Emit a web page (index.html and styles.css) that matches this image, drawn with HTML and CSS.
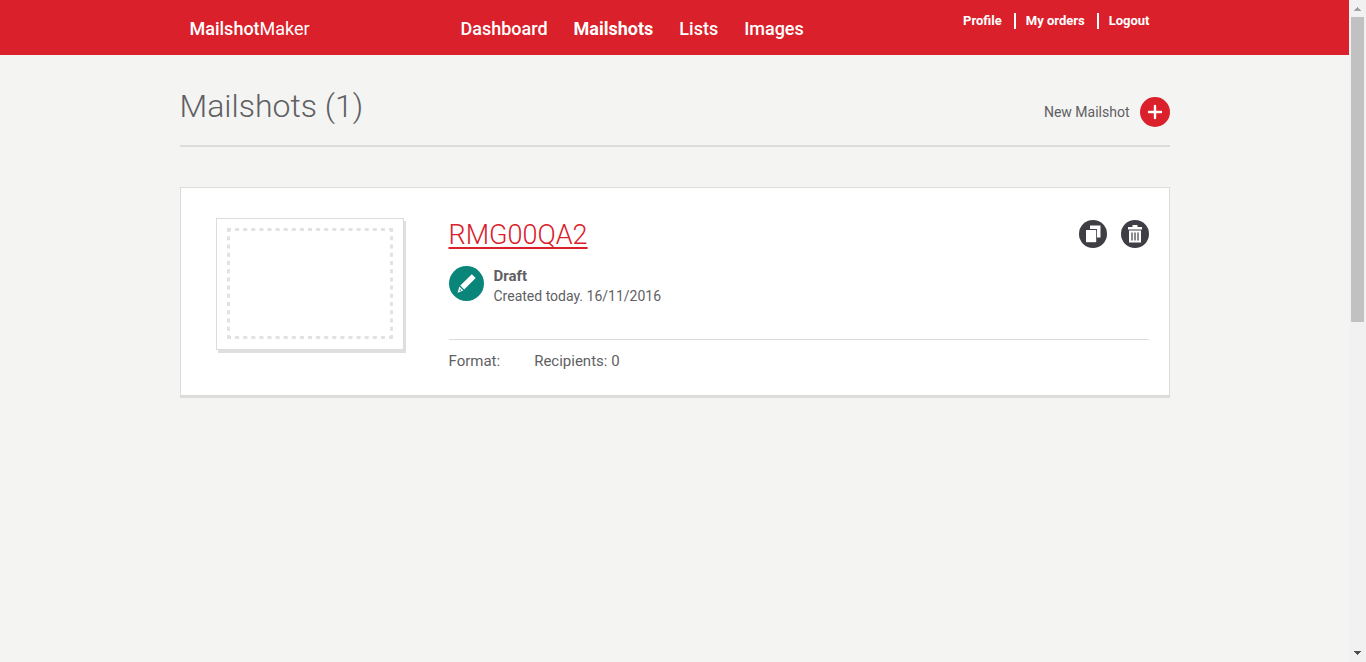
FILE: index.html
```html
<!DOCTYPE html>
<html lang="en">
<head>
<meta charset="utf-8">
<meta name="viewport" content="width=device-width, initial-scale=1">
<title>MailshotMaker</title>
<link rel="stylesheet" href="styles.css">
</head>
<body>
<div class="frame">
  <div class="page">
    <header class="header">
      <div class="container header-row">
        <a class="brand" href="#"><strong>Mailshot</strong>Maker</a>
        <nav class="nav" aria-label="Main">
          <a href="#">Dashboard</a>
          <a class="active" href="#" aria-current="page">Mailshots</a>
          <a href="#">Lists</a>
          <a href="#">Images</a>
        </nav>
        <nav class="account" aria-label="Account">
          <a href="#">Profile</a>
          <a href="#">My orders</a>
          <a href="#">Logout</a>
        </nav>
      </div>
    </header>
    <main class="container">
      <div class="title-row">
        <h1>Mailshots (1)</h1>
        <a class="new" href="#">New Mailshot
          <svg width="30" height="30" viewBox="0 0 30 30" aria-hidden="true">
            <circle cx="15" cy="15" r="15" fill="#da202a"/>
            <path d="M9 15h12M15 9v12" stroke="#fff" stroke-width="2.400" stroke-linecap="round"/>
          </svg>
        </a>
      </div>
      <article class="card">
        <div class="thumb">
          <svg viewBox="0 0 166 111" aria-hidden="true">
            <path d="M0 1.500H166M0 109.500H166" stroke="#e2e2e2" stroke-width="3" stroke-dasharray="4 4.100"/>
            <path d="M1.500 0V111M164.500 0V111" stroke="#e2e2e2" stroke-width="3" stroke-dasharray="4 4.230"/>
          </svg>
        </div>
        <div class="details">
          <div class="details-top">
            <h2><a href="#">RMG00QA2</a></h2>
            <div class="actions">
              <button type="button" aria-label="Copy">
                <svg width="28" height="28" viewBox="0 0 28 28" aria-hidden="true">
                  <circle cx="14" cy="14" r="14" fill="#3e3e44"/>
                  <path fill="#fff" d="M11 5.500h10.500v12H18V9h-7z"/>
                  <path fill="#fff" d="M7 10h10.200v12.200H7z"/>
                </svg>
              </button>
              <button type="button" aria-label="Delete">
                <svg width="28" height="28" viewBox="0 0 28 28" aria-hidden="true">
                  <circle cx="14" cy="14" r="14" fill="#3e3e44"/>
                  <path fill="#fff" d="M11.500 5h5v2H21v2.500H7V7h4.500zM8 10.500h12v12H8z"/>
                  <path stroke="#3e3e44" stroke-width="1.200" d="M11 12.500v8M14 12.500v8M17 12.500v8"/>
                </svg>
              </button>
            </div>
          </div>
          <div class="status">
            <svg width="35" height="35" viewBox="0 0 35 35" aria-hidden="true">
              <circle cx="17.500" cy="17.500" r="17.500" fill="#0a857a"/>
              <path fill="#fff" d="M22.800 8.200L26.700 12 15.200 23.400l-3.900-3.900zM10.400 20.500l3.900 3.900-5.700 2.300z"/>
              <path fill="#0a857a" d="M11.100 23.100l1.300 1.300-1.900.7z"/>
            </svg>
            <div>
              <strong>Draft</strong>
              <p>Created today. 16/11/2016</p>
            </div>
          </div>
          <div class="meta">
            <span>Format:</span>
            <span>Recipients: 0</span>
          </div>
        </div>
      </article>
    </main>
  </div>
  <div class="scrollbar" aria-hidden="true">
    <svg width="17" height="17" viewBox="0 0 17 17" shape-rendering="crispEdges"><path fill="#a3a3a3" d="M5 11L8.500 7L12 11z"/></svg>
    <div class="track"><div class="handle"></div></div>
    <svg width="17" height="17" viewBox="0 0 17 17" shape-rendering="crispEdges"><path fill="#505050" d="M5 6H12L8.500 10z"/></svg>
  </div>
</div>
</body>
</html>
```
FILE: styles.css
```css
* {
  box-sizing: border-box;
}

body {
  margin: 0;
  background: #f4f4f2;
  color: #5f5f64;
  font: 14px/20px Roboto, "Liberation Sans", sans-serif;
}

h1, h2, p {
  margin: 0;
  font-weight: 300;
}

a {
  color: inherit;
  text-decoration: none;
}

svg {
  display: block;
}

.frame {
  display: flex;
  min-height: 100vh;
}

.page {
  flex: 1;
  min-width: 0;
}

.container {
  max-width: 990px;
  margin: 0 auto;
}

.header {
  background: #da202a;
  color: #fff;
}

.header-row {
  display: flex;
  align-items: flex-start;
  padding: 13px 20px 10px 10px;
}

.brand {
  width: 271px;
  font-size: 18px;
  line-height: 32px;
}

.brand strong {
  font-weight: 500;
}

.nav {
  display: flex;
  gap: 26px;
  font-size: 18px;
  line-height: 32px;
  font-weight: 500;
}

.nav .active {
  font-weight: 700;
}

.account {
  display: flex;
  margin-left: auto;
  font-size: 13px;
  line-height: 16px;
  font-weight: 700;
}

.account a + a {
  margin-left: 12px;
  padding-left: 10px;
  border-left: 2px solid #fff;
}

.title-row {
  display: flex;
  align-items: center;
  justify-content: space-between;
  height: 92px;
  padding-top: 12px;
  border-bottom: 2px solid #dcdcda;
}

h1 {
  font-size: 32px;
  line-height: 40px;
}

.new {
  display: flex;
  align-items: center;
  gap: 10px;
  padding-top: 12px;
}

.card {
  display: flex;
  gap: 45px;
  margin-top: 40px;
  padding: 30px 20px 24px 35px;
  background: #fff;
  border: 1px solid #dcdcda;
  border-bottom-width: 3px;
}

.thumb {
  align-self: flex-start;
  width: 188px;
  padding: 9px 10px 10px;
  border: 1px solid #dcdcda;
  box-shadow: 2px 3px 0 #dfdfdf;
}

.details {
  flex: 1;
}

.details-top {
  display: flex;
  justify-content: space-between;
  align-items: flex-start;
}

h2 {
  color: #da202a;
  font-size: 27px;
  line-height: 34px;
}

h2 a {
  text-decoration: underline;
  text-decoration-thickness: 2px;
  text-underline-offset: 3px;
}

.actions {
  display: flex;
  gap: 14px;
  padding-top: 2px;
}

.actions button {
  padding: 0;
  border: 0;
  background: none;
}

.status {
  display: flex;
  gap: 10px;
  margin-top: 14px;
  padding-bottom: 33px;
  border-bottom: 1px solid #dcdcda;
}

.status strong {
  font-size: 15px;
}

.status p {
  font-weight: 400;
}

.meta {
  display: flex;
  gap: 34px;
  padding-top: 11px;
  font-size: 15px;
}

.scrollbar {
  display: flex;
  flex-direction: column;
  width: 17px;
  background: #f1f1f1;
}

.track {
  flex: 1;
  padding: 0 2px;
}

.handle {
  height: 48.6%;
  background: #c1c1c1;
}
```
